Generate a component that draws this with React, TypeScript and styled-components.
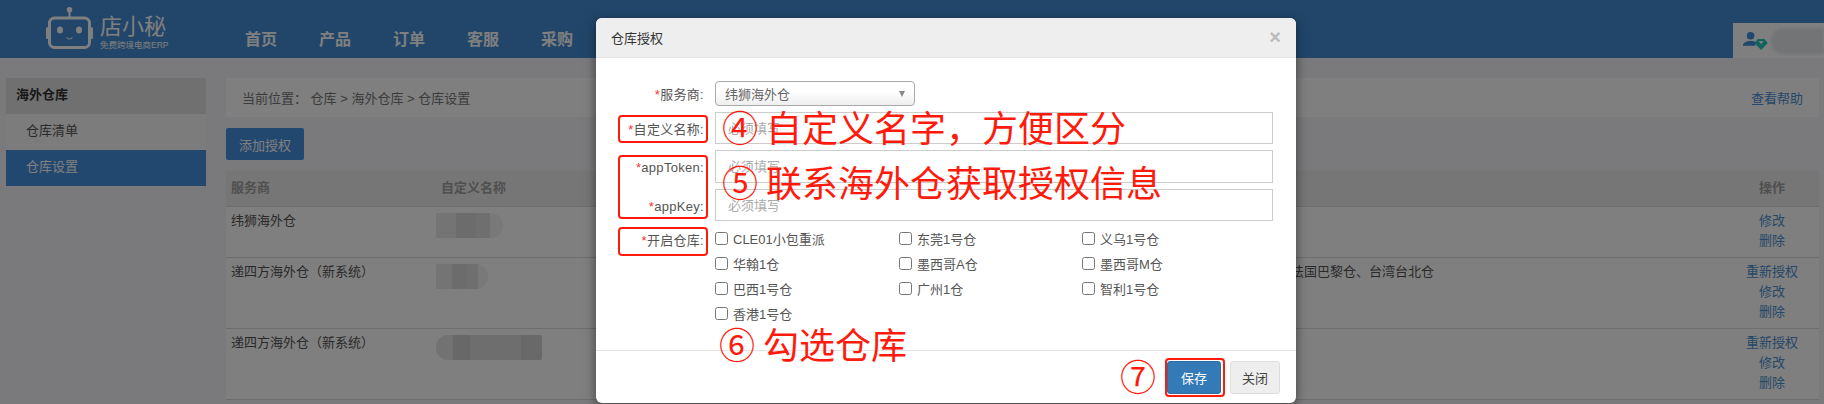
import React from "react";
import styled, { createGlobalStyle } from "styled-components";

const GlobalStyle = createGlobalStyle`
  html, body {
    margin: 0;
    padding: 0;
    background: #f4f5f8;
  }
  * {
    box-sizing: border-box;
  }
  body {
    font-family: "Liberation Sans", "Noto Sans CJK SC", sans-serif;
    font-size: 13px;
    color: #555;
  }
`;

const Page = styled.div`
  position: relative;
  width: 1824px;
  height: 404px;
  overflow: hidden;
`;

const Header = styled.header`
  display: flex;
  height: 58px;
  background: #428cd4;
  padding-left: 46px;
`;

const Brand = styled.div`
  display: flex;
  align-items: flex-start;
  width: 199px;
  padding-top: 7px;
  color: #fff;
`;

const BrandText = styled.div`
  display: flex;
  flex-direction: column;
  margin-left: 7px;
  padding-top: 8px;
`;

const BrandName = styled.div`
  font-size: 22px;
  line-height: 24px;
  white-space: nowrap;
`;

const BrandSub = styled.div`
  font-size: 8.5px;
  line-height: 10px;
  margin-top: 1px;
  white-space: nowrap;
`;

const Nav = styled.nav`
  display: flex;
  flex: 1;
  align-items: center;
  gap: 42px;
  padding-top: 18px;
`;

const NavItem = styled.a`
  color: #fff;
  font-size: 16px;
  font-weight: 700;
`;

const UserBox = styled.div`
  display: flex;
  align-items: center;
  align-self: flex-end;
  width: 91px;
  height: 35px;
  background: #fff;
  padding-left: 10px;
`;

const UserName = styled.div`
  width: 56px;
  height: 26px;
  margin-left: 2px;
  border-radius: 12px 0 0 12px;
  background: #e4e8eb;
  filter: blur(1.5px);
`;

const Body = styled.div`
  display: flex;
  gap: 20px;
  padding: 20px 5px 0 6px;
`;

const Sidebar = styled.aside`
  width: 200px;
  flex: none;
`;

const SideTitle = styled.div`
  height: 36px;
  line-height: 34px;
  padding-left: 10px;
  background: #e0e0e0;
  color: #333;
  font-weight: 700;
`;

const SideItem = styled.a<{ $active?: boolean }>`
  display: block;
  height: 36px;
  line-height: 34px;
  padding-left: 20px;
  background: ${(p) => (p.$active ? "#4690de" : "#f8f8f8")};
  color: ${(p) => (p.$active ? "#fff" : "#555")};
`;

const Main = styled.main`
  flex: 1;
  min-width: 0;
`;

const Crumbs = styled.div`
  display: flex;
  justify-content: space-between;
  align-items: center;
  height: 39px;
  padding: 0 16px;
  background: #fff;
  color: #777;
`;

const Link = styled.a`
  display: block;
  color: #4a8fd0;
`;

const AddButton = styled.button`
  display: block;
  width: 78px;
  height: 32px;
  margin: 11px 0 10px;
  border: none;
  border-radius: 2px;
  background: #4690de;
  color: #fff;
  font: inherit;
`;

const Table = styled.div`
  background: #fff;
  border-top: 1px solid #eee;
`;

const Row = styled.div<{ $height: number; $head?: boolean }>`
  display: grid;
  grid-template-columns: 210px 226px 1fr 90px;
  height: ${(p) => p.$height}px;
  padding: ${(p) => (p.$head ? "7px" : "4px")} 0 0 5px;
  line-height: 20px;
  border-bottom: 1px solid #ddd;
  background: ${(p) => (p.$head ? "#ececec" : "#fff")};
  color: ${(p) => (p.$head ? "#a0a0a0" : "#555")};
  font-weight: ${(p) => (p.$head ? 700 : 400)};
`;

const Cell = styled.div`
  white-space: nowrap;
  overflow: hidden;
`;

const Actions = styled.div`
  text-align: center;
  padding-right: 4px;
`;

const Smudge = styled.div<{ $w: number; $dark?: boolean }>`
  width: ${(p) => p.$w}px;
  height: 25px;
  margin: 2px 0 0 -5px;
  border-radius: ${(p) => (p.$dark ? "12px 2px 2px 12px" : "2px 12px 12px 2px")};
  background: ${(p) =>
    p.$dark
      ? "linear-gradient(90deg, #e4e4e4 0 16%, #d0d0d0 16% 32%, #dcdcdc 32% 80%, #d2d2d2 80%)"
      : "linear-gradient(90deg, #e8e8e8 0 30%, #d8d8d8 30% 60%, #dedede 60% 80%, #f2f2f2 80%)"};
  filter: blur(0.6px);
`;

const Backdrop = styled.div`
  position: absolute;
  inset: 0;
  background: rgba(0, 0, 0, 0.5);
`;

const Modal = styled.section`
  position: absolute;
  left: 596px;
  top: 18px;
  width: 700px;
  height: 385px;
  display: flex;
  flex-direction: column;
  background: #fff;
  border-radius: 6px;
  box-shadow: 0 3px 12px rgba(0, 0, 0, 0.5);
`;

const ModalHead = styled.div`
  display: flex;
  justify-content: space-between;
  align-items: center;
  height: 40px;
  padding: 0 15px;
  background: #eee;
  border-bottom: 1px solid #e5e5e5;
  border-radius: 6px 6px 0 0;
  color: #333;
`;

const Close = styled.span`
  color: #bbb;
  font-size: 20px;
  font-weight: 700;
`;

const Form = styled.div`
  flex: 1;
  display: grid;
  grid-template-columns: 108px 558px;
  column-gap: 11px;
  align-content: start;
  padding-top: 23px;
`;

const Label = styled.div<{ $top?: boolean }>`
  text-align: right;
  line-height: 20px;
  color: #555;
  letter-spacing: 0.3px;
  white-space: nowrap;
  align-self: ${(p) => (p.$top ? "start" : "center")};
  margin-top: ${(p) => (p.$top ? 4 : -3)}px;

  i {
    color: #e33;
    font-style: normal;
  }
`;

const Select = styled.div`
  display: flex;
  justify-content: space-between;
  align-items: center;
  width: 200px;
  height: 25px;
  margin-bottom: 6px;
  padding: 0 9px;
  border: 1px solid #aaa;
  border-radius: 4px;
  background: linear-gradient(#fff 0%, #fff 40%, #eee 100%);
  color: #666;
`;

const Caret = styled.span`
  width: 0;
  height: 0;
  border-left: 3.5px solid transparent;
  border-right: 3.5px solid transparent;
  border-top: 6px solid #888;
`;

const Input = styled.input<{ $tall?: boolean }>`
  display: block;
  width: 100%;
  height: ${(p) => (p.$tall ? 33 : 32)}px;
  margin-bottom: 6px;
  padding: 0 12px;
  border: 1px solid #ccc;
  outline: none;
  font: inherit;

  &::placeholder {
    color: #aaa;
  }
`;

const Checks = styled.div`
  display: grid;
  grid-template-columns: 184px 183px 183px;
  grid-auto-rows: 25px;
  margin-top: -1px;
`;

const Check = styled.label`
  display: flex;
  align-items: center;
  color: #555;
  white-space: nowrap;

  input {
    width: 13px;
    height: 13px;
    margin: 0 5px 0 0;
  }
`;

const ModalFoot = styled.div`
  display: flex;
  justify-content: flex-end;
  gap: 9px;
  height: 53px;
  padding: 10px 16px 0 0;
  border-top: 1px solid #e5e5e5;
`;

const FootButton = styled.button<{ $primary?: boolean }>`
  height: 33px;
  width: ${(p) => (p.$primary ? 54 : 50)}px;
  border-radius: 3px;
  border: 1px solid ${(p) => (p.$primary ? "#2e6da4" : "#ddd")};
  background: ${(p) => (p.$primary ? "#337ab7" : "#eee")};
  color: ${(p) => (p.$primary ? "#fff" : "#444")};
  font: inherit;
`;

const RedBox = styled.div<{ $x: number; $y: number; $w: number; $h: number }>`
  position: absolute;
  left: ${(p) => p.$x}px;
  top: ${(p) => p.$y}px;
  width: ${(p) => p.$w}px;
  height: ${(p) => p.$h}px;
  border: 2px solid #ff1a0c;
  border-radius: 4px;
`;

const Note = styled.div<{ $x: number; $y: number }>`
  position: absolute;
  left: ${(p) => p.$x}px;
  top: ${(p) => p.$y}px;
  font-family: "Noto Sans CJK SC", sans-serif;
  font-size: 36px;
  line-height: 40px;
  color: #ff1a0c;
  white-space: nowrap;
`;

const RobotLogo = () => (
  <svg width="47" height="42" viewBox="0 0 47 42" fill="none">
    <circle cx="23.5" cy="2.8" r="2.8" fill="#fff" />
    <path d="M23.5 4v6" stroke="#fff" strokeWidth="2" />
    <rect x="3.5" y="11" width="40" height="29.5" rx="5" stroke="#fff" strokeWidth="3" />
    <rect x="0" y="20" width="3" height="12" rx="1.5" fill="#fff" />
    <rect x="44" y="20" width="3" height="12" rx="1.5" fill="#fff" />
    <ellipse cx="14" cy="23" rx="3" ry="3.6" fill="#fff" />
    <ellipse cx="33" cy="23" rx="3" ry="3.6" fill="#fff" />
    <path d="M20.5 30.5c1.5 2 4.500 2 6 0" stroke="#fff" strokeWidth="1.2" />
  </svg>
);

const UserIcon = () => (
  <svg width="27" height="20" viewBox="0 0 27 20">
    <circle cx="8" cy="4.500" r="4" fill="#3f8fe0" />
    <path d="M0 15c0-3.500 3.500-5 8-5 2 0 3.500.2 5 .8V15H0z" fill="#3f8fe0" />
    <path d="M12 12l3.500-4h7l3.500 4-7 7.500z" fill="#22c8b8" />
    <path d="M16.500 10h5L19 13.500z" fill="#fff" />
  </svg>
);

const warehouses = [
  ["CLE01小包重派", "东莞1号仓", "义乌1号仓"],
  ["华翰1仓", "墨西哥A仓", "墨西哥M仓"],
  ["巴西1号仓", "广州1仓", "智利1号仓"],
  ["香港1号仓"],
];

const navItems = ["首页", "产品", "订单", "客服", "采购"];

const hiddenList =
  "英国伦敦仓、德国法兰仓、美国洛杉仓、美国纽约仓、澳洲悉尼仓、日本东京仓、加拿大多仓、西班牙马仓、法国巴黎仓、台湾台北仓";

export default function App() {
  return (
    <Page>
      <GlobalStyle />
      <Header>
        <Brand>
          <RobotLogo />
          <BrandText>
            <BrandName>店小秘</BrandName>
            <BrandSub>免费跨境电商ERP</BrandSub>
          </BrandText>
        </Brand>
        <Nav>
          {navItems.map((n) => (
            <NavItem key={n}>{n}</NavItem>
          ))}
        </Nav>
        <UserBox>
          <UserIcon />
          <UserName />
        </UserBox>
      </Header>
      <Body>
        <Sidebar>
          <SideTitle>海外仓库</SideTitle>
          <SideItem>仓库清单</SideItem>
          <SideItem $active>仓库设置</SideItem>
        </Sidebar>
        <Main>
          <Crumbs>
            <span>当前位置：&nbsp;仓库 &gt; 海外仓库 &gt; 仓库设置</span>
            <Link>查看帮助</Link>
          </Crumbs>
          <AddButton>添加授权</AddButton>
          <Table>
            <Row $head $height={36}>
              <Cell>服务商</Cell>
              <Cell>自定义名称</Cell>
              <Cell>开启仓库</Cell>
              <Actions>操作</Actions>
            </Row>
            <Row $height={51}>
              <Cell>纬狮海外仓</Cell>
              <Smudge $w={67} />
              <Cell />
              <Actions>
                <Link>修改</Link>
                <Link>删除</Link>
              </Actions>
            </Row>
            <Row $height={71}>
              <Cell>递四方海外仓（新系统）</Cell>
              <Smudge $w={52} />
              <Cell>{hiddenList}</Cell>
              <Actions>
                <Link>重新授权</Link>
                <Link>修改</Link>
                <Link>删除</Link>
              </Actions>
            </Row>
            <Row $height={71}>
              <Cell>递四方海外仓（新系统）</Cell>
              <Smudge $w={106} $dark />
              <Cell />
              <Actions>
                <Link>重新授权</Link>
                <Link>修改</Link>
                <Link>删除</Link>
              </Actions>
            </Row>
          </Table>
        </Main>
      </Body>
      <Backdrop />
      <Modal>
        <ModalHead>
          <span>仓库授权</span>
          <Close>×</Close>
        </ModalHead>
        <Form>
          <Label>
            <i>*</i>服务商:
          </Label>
          <Select>
            纬狮海外仓
            <Caret />
          </Select>
          <Label>
            <i>*</i>自定义名称:
          </Label>
          <Input placeholder="必须填写" />
          <Label>
            <i>*</i>appToken:
          </Label>
          <Input $tall placeholder="必须填写" />
          <Label>
            <i>*</i>appKey:
          </Label>
          <Input placeholder="必须填写" />
          <Label $top>
            <i>*</i>开启仓库:
          </Label>
          <Checks>
            {warehouses.flat().map((w) => (
              <Check key={w}>
                <input type="checkbox" />
                {w}
              </Check>
            ))}
          </Checks>
        </Form>
        <ModalFoot>
          <FootButton $primary>保存</FootButton>
          <FootButton>关闭</FootButton>
        </ModalFoot>
      </Modal>
      <RedBox $x={618} $y={115} $w={90} $h={28} />
      <RedBox $x={618} $y={155} $w={90} $h={64} />
      <RedBox $x={618} $y={227} $w={90} $h={29} />
      <RedBox $x={1165} $y={358} $w={60} $h={39} />
      <Note $x={722} $y={106}>④ 自定义名字，方便区分</Note>
      <Note $x={722} $y={161}>⑤ 联系海外仓获取授权信息</Note>
      <Note $x={719} $y={323}>⑥ 勾选仓库</Note>
      <Note $x={1120} $y={355}>⑦</Note>
    </Page>
  );
}
